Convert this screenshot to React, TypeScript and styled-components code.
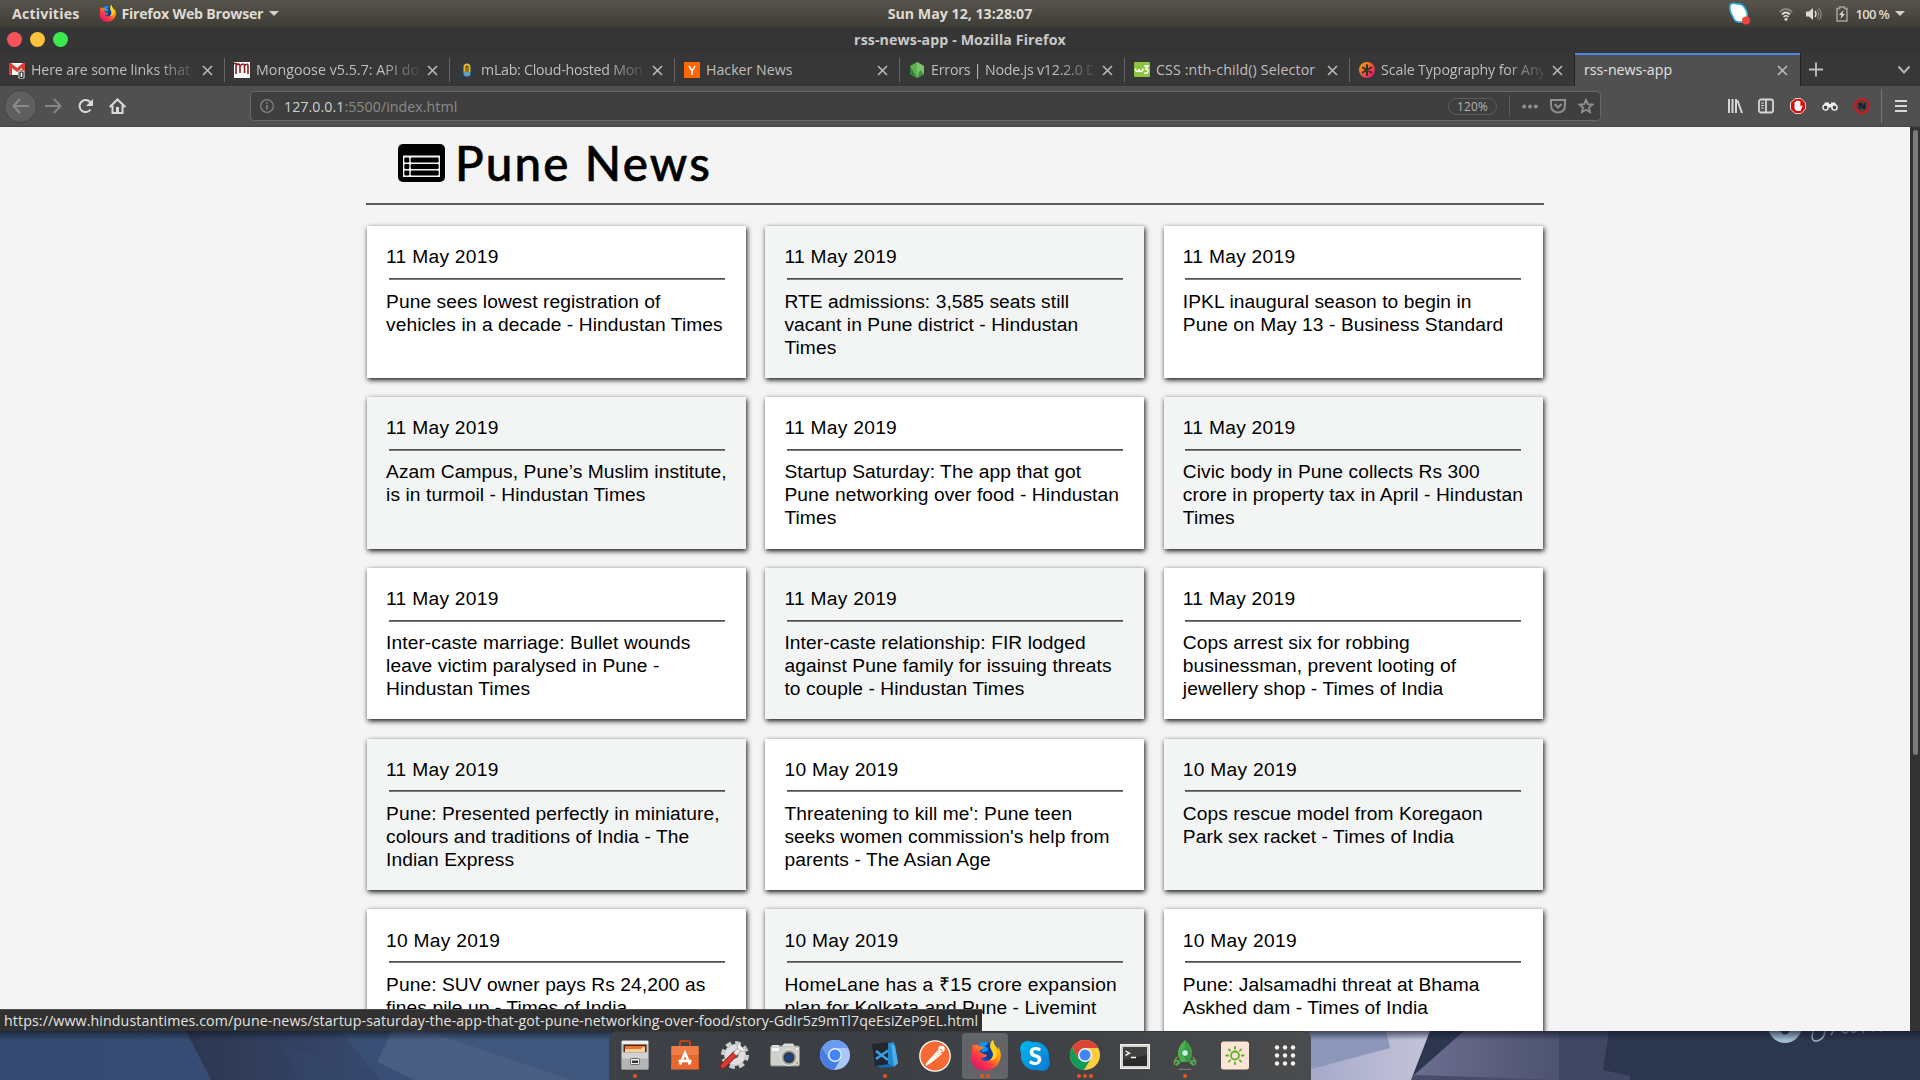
import React from 'react';
import styled, { createGlobalStyle } from 'styled-components';

const UI = '"Open Sans", "Noto Sans", sans-serif';

const GlobalStyle = createGlobalStyle`
  * { box-sizing: border-box; }
  body { margin: 0; background: #2d364f; overflow: hidden; }
  svg { display: block; flex: none; }
`;

const Screen = styled.div`
  width: 1920px;
  height: 1080px;
  display: flex;
  flex-direction: column;
  overflow: hidden;
  font-family: ${UI};
`;

/* ---------- desktop panel ---------- */

const Panel = styled.div`
  height: 27px;
  flex: none;
  display: grid;
  grid-template-columns: 1fr auto 1fr;
  align-items: center;
  background: linear-gradient(#57544b, #3f3d38);
  color: #dfdbd2;
  font-size: 14.2px;
  font-weight: 700;
  line-height: 26px;
`;

const PanelLeft = styled.div`
  display: flex;
  align-items: center;
  padding-left: 12px;
`;

const PanelRight = styled.div`
  display: flex;
  align-items: center;
  justify-content: flex-end;
  padding-right: 15px;
`;

const Label = styled.span<{ $ls?: number; $ml?: number; $size?: number; $weight?: number }>`
  white-space: pre;
  letter-spacing: ${p => p.$ls ?? 0}px;
  margin-left: ${p => p.$ml ?? 0}px;
  ${p => p.$size && `font-size: ${p.$size}px;`}
  ${p => p.$weight && `font-weight: ${p.$weight};`}
`;

const Caret = styled.i<{ $ml: number }>`
  margin-left: ${p => p.$ml}px;
  border: 5px solid transparent;
  border-top-color: #d5d1c8;
  border-bottom: 0;
`;

const Gap = styled.i<{ $w: number }>`
  width: ${p => p.$w}px;
  flex: none;
`;

/* ---------- window chrome ---------- */

const TitleBar = styled.div`
  height: 26px;
  flex: none;
  display: grid;
  grid-template-columns: 1fr auto 1fr;
  align-items: center;
  background: #353535;
  color: #c9c9c9;
  font-size: 14.2px;
  font-weight: 700;
  padding-bottom: 1px;
`;

const Lights = styled.div`
  display: flex;
  gap: 8px;
  padding-left: 7px;
`;

const Light = styled.i<{ $c: string }>`
  width: 15px;
  height: 15px;
  border-radius: 50%;
  background: ${p => p.$c};
`;

const TabStrip = styled.div`
  height: 33px;
  flex: none;
  display: flex;
  background: #373737;
`;

const Tab = styled.div<{ $active?: boolean; $line?: boolean }>`
  width: 225px;
  height: 33px;
  flex: none;
  display: flex;
  align-items: center;
  padding: 1px 12.5px 0 9px;
  font-size: 14.2px;
  color: ${p => (p.$active ? '#e2e2e2' : '#bfbfbf')};
  ${p =>
    p.$active &&
    `background: #505050; box-shadow: inset 0 2px #4a86e8, -1px 0 #222, 1px 0 #222;`}
  ${p =>
    p.$line &&
    `background: linear-gradient(#656565, #656565) 224px 5px / 1px 24px no-repeat;`}
`;

const TabText = styled.span<{ $ls: number; $fade?: boolean; $ml?: number }>`
  flex: 1;
  min-width: 0;
  overflow: hidden;
  white-space: pre;
  line-height: 24px;
  margin-left: ${p => p.$ml ?? 6}px;
  margin-right: 9px;
  letter-spacing: ${p => p.$ls}px;
  ${p => p.$fade && `mask-image: linear-gradient(90deg, #000 calc(100% - 36px), rgba(0, 0, 0, 0.15));`}
`;

const Toolbar = styled.div`
  height: 41px;
  flex: none;
  display: flex;
  align-items: center;
  padding-left: 4px;
  background: #505050;
  border-bottom: 1px solid #464646;
`;

const BackButton = styled.div`
  width: 33px;
  height: 33px;
  border-radius: 50%;
  background: #5f5f5f;
  border: 1px solid #434343;
  display: grid;
  place-items: center;
`;

const UrlBar = styled.div`
  width: 1351px;
  height: 30px;
  margin-left: 124px;
  margin-right: 126px;
  display: flex;
  align-items: center;
  padding: 0 6px 0 9px;
  background: #3f3f3f;
  border: 1px solid #676767;
  border-radius: 4px;
  font-size: 14.2px;
  color: #cfcfcf;
`;

const Url = styled.span`
  margin-left: 10px;
  margin-right: auto;
  letter-spacing: 0.06px;
  b { font-weight: 400; color: #8a8a8a; }
`;

const Zoom = styled.span`
  width: 49px;
  height: 17px;
  border: 1px solid #5c5c5c;
  border-radius: 9px;
  font-size: 11.8px;
  line-height: 15px;
  letter-spacing: 0.2px;
  text-align: center;
  color: #b5b5b5;
`;

const Rule = styled.i<{ $h: number; $c: string; $ml: number; $mr: number }>`
  width: 1px;
  height: ${p => p.$h}px;
  background: ${p => p.$c};
  margin: 0 ${p => p.$mr}px 0 ${p => p.$ml}px;
`;

/* ---------- page ---------- */

const Viewport = styled.div`
  position: relative;
  height: 904px;
  flex: none;
  display: flex;
  overflow: hidden;
  background: #f4f4f4;
`;

const Page = styled.main`
  width: 1910px;
  padding-left: 366px;
  font-family: "Liberation Sans", Arial, sans-serif;
  color: #000;
`;

const Header = styled.header`
  width: 1178px;
  height: 78px;
  display: flex;
  padding: 17px 0 0 32px;
  border-bottom: 2px solid #5c5c5c;
`;

const Brand = styled.h1`
  margin: -10px 0 0 10px;
  font: 500 47.5px/58px Lato, sans-serif;
  letter-spacing: 2.2px;
  white-space: pre;
  -webkit-text-stroke: 0.6px #000;
`;

const Grid = styled.section`
  display: grid;
  grid-template-columns: repeat(3, 379.2px);
  gap: 19.2px;
  padding: 21.2px 0 0 0.9px;
`;

const Card = styled.article`
  height: 151.6px;
  padding: 19.2px;
  background: #fff;
  box-shadow: 1px 2px 5px #111;
  font-size: 19.2px;
  line-height: 23px;
  &:nth-child(even) { background: #f3f5f5; }
`;

const DateLine = styled.div`
  letter-spacing: 0.28px;
`;

const Line = styled.div<{ $rupee: boolean }>`
  white-space: nowrap;
  letter-spacing: ${p => (p.$rupee ? 0.2 : 0.075)}px;
`;

const Divider = styled.div`
  height: 2px;
  margin: 9.6px 2.35px 9.6px 2.45px;
  background: linear-gradient(#4f4f4f 50%, #7c7c7c 50%);
`;

const Scrollbar = styled.div`
  width: 10px;
  background: #333;
  padding: 3px 2px 0 3px;
`;

const Thumb = styled.div`
  height: 625px;
  border-radius: 3px;
  background: #7b7b7b;
`;

const Status = styled.div`
  position: absolute;
  left: 0;
  bottom: 0;
  width: 982px;
  height: 22px;
  padding-left: 4px;
  border-top: 1px solid #4c4c4c;
  background: #313131;
  color: #e4e4e4;
  font-size: 14.2px;
  line-height: 21px;
  white-space: nowrap;
  letter-spacing: 0.115px;
`;

/* ---------- desktop and dock ---------- */

const Desktop = styled.div`
  position: relative;
  height: 49px;
  flex: none;
  padding-left: 609px;
`;

const Wallpaper = styled.svg`
  position: absolute;
  inset: 0;
`;

const Dock = styled.nav`
  position: relative;
  width: 702px;
  height: 49px;
  display: flex;
  padding: 0 1px;
  background: linear-gradient(90deg, #3e4246, #3b3f43 30%, #3e4145 60%, #4a4b4c);
  border-radius: 8px 8px 0 0;
  border-top: 1px solid #373a3c;
`;

const DockItem = styled.div<{ $active?: boolean }>`
  width: 46px;
  height: 46px;
  margin: 1px 2px;
  display: grid;
  grid-template-rows: 1fr 5px;
  justify-items: center;
  padding-top: 7px;
  border-radius: 4px;
  background: ${p => (p.$active ? '#626467' : 'transparent')};
`;

const Dots = styled.div`
  display: flex;
  gap: 2px;
`;

const Dot = styled.i`
  width: 4px;
  height: 4px;
  border-radius: 50%;
  background: #e95420;
`;

/* ---------- drawings ---------- */

const FirefoxArt = ({ s }: { s: number }) => (
  <svg width={s} height={s} viewBox="0 0 32 32">
    <defs>
      <linearGradient id="fx1" x1="1" y1="0" x2="0.2" y2="1">
        <stop offset="0" stopColor="#ffe900" />
        <stop offset=".4" stopColor="#ff980e" />
        <stop offset=".7" stopColor="#ff3647" />
        <stop offset="1" stopColor="#d5136e" />
      </linearGradient>
    </defs>
    <circle cx="15" cy="14" r="11" fill="#0a57c8" />
    <path d="M13 3c6-2 11 1 12 7l-4 12-10-4z" fill="#0a3f9e" />
    <path d="M9 4c3-2 7-3 10-1l-4 4c3 0 4 2 3 4l-5 2z" fill="#1492f5" />
    <path
      d="M3 3C2 6 2 8 2.500 10C-1 18 1 26 8 30c8 4 18 1 22-7 3-6 2-12-1-16 0 1 .2 2 0 3C27 6 24 5 24 0c-3 2-4 6-2 10 3 4 2 9-2 11-4 2-8 0-9-3 2 1 4 .5 6-1 1-1 0-2-1-2-3 0-3-2-6-2 0-2 1-3 3-4 1-1 1-2 0-2-2 0-4-.5-5-2-2-.5-3 0-4 1-1-1-1.500-3-1-3z"
      fill="url(#fx1)"
    />
    <path d="M24 0c-3 2-4 6-2 10 3 4 2 9-2 11 6 0 9-4 8-10-1-4-4-6-4-11z" fill="#ffd21f" />
  </svg>
);

const Files = () => (
  <svg width="28" height="30" viewBox="0 0 28 30">
    <rect x=".5" y=".5" width="27" height="29" rx="1.500" fill="#c9c9c9" stroke="#8d8d8d" />
    <rect x="1" y="1" width="26" height="3" fill="#eee" />
    <rect x="2.500" y="4.500" width="23" height="8" fill="#55250f" />
    <path d="M4 6h20v6H4z" fill="#e8772c" />
    <path d="M4 9h16l2-2h2v5H4z" fill="#f8cf9b" />
    <path d="M1 12.500h26V29H1z" fill="#b5b5b5" />
    <path d="M1 12.500h26v6H1z" fill="#d2d2d2" />
    <rect x="9.500" y="18.500" width="9" height="6" rx="1" fill="#eee" stroke="#666" />
    <rect x="11" y="20.500" width="6" height="2.500" fill="#333" />
  </svg>
);

const Software = () => (
  <svg width="30" height="30" viewBox="0 0 30 30">
    <path d="M10 8V2.500Q10 1 12 1h6q2 0 2 1.500V8" fill="none" stroke="#c0441a" strokeWidth="2" />
    <path d="M1.500 6h27L29 29.500H1z" fill="#e9682f" />
    <path d="M1.500 6h27l.2 9H1.200z" fill="#f07c46" />
    <path d="M10 24.500L15 13l5 11.500M8.500 21h13" fill="none" stroke="#fff" strokeWidth="2.600" />
  </svg>
);

const Tools = () => (
  <svg width="30" height="30" viewBox="0 0 30 30">
    <circle cx="15" cy="15" r="12" fill="none" stroke="#cfcfcf" strokeWidth="4" strokeDasharray="5.400 4" />
    <circle cx="15" cy="15" r="10.500" fill="#e0e0e0" stroke="#c5c5c5" />
    <circle cx="15" cy="15" r="3.500" fill="#74777a" />
    <path d="M3 26L15 14" stroke="#8b1414" strokeWidth="6" strokeLinecap="round" />
    <path d="M3 26L15 14" stroke="#d83a34" strokeWidth="4.500" strokeLinecap="round" />
    <path d="M15 14l6-6" stroke="#999" strokeWidth="5" />
    <path d="M15 14l6-6" stroke="#eee" strokeWidth="3.600" />
    <path d="M20 2q-5 4-1 8 5 3 8-2l-4 .500-2-2z" fill="#f2f2f2" stroke="#888" strokeWidth=".6" />
  </svg>
);

const Camera = () => (
  <svg width="30" height="30" viewBox="0 0 30 30">
    <rect x=".5" y="6" width="29" height="20" rx="1.500" fill="#cfcfcb" stroke="#8e8e8a" />
    <path d="M2 5h7v2H2zM14 3.500h9l2 3H12z" fill="#dededa" />
    <rect x="2" y="8" width="7" height="3" fill="#f6f6f6" />
    <circle cx="19" cy="17.500" r="8" fill="#a4a4a4" stroke="#ececec" />
    <circle cx="19" cy="17.500" r="5.500" fill="#333a44" />
    <circle cx="19" cy="17.500" r="3" fill="#12459a" />
    <circle cx="27" cy="9" r="1" fill="#fff" />
    <rect x="26" y="22" width="2" height="2" fill="#f0a020" />
  </svg>
);

const ChromeArt = ({ mono }: { mono?: boolean }) => {
  const [top, right, left] = mono ? ['#6b9cf0', '#a8c7fa', '#4a7de2'] : ['#db4437', '#ffcd40', '#0f9d58'];
  return (
    <svg width="30" height="30" viewBox="0 0 30 30">
      <circle cx="15" cy="15" r="15" fill={right} />
      <path d="M2 7.500A15 15 0 0 1 28.200 8H15L8.500 18.500z" fill={top} />
      <path d="M2 7.500A15 15 0 0 0 14 30l7-11.500-12.500 0z" fill={left} />
      <circle cx="15" cy="15" r="7" fill={mono ? '#e6effd' : '#f4f4f4'} />
      <circle cx="15" cy="15" r="5.500" fill="#4285f4" />
    </svg>
  );
};

const Code = () => (
  <svg width="28" height="30" viewBox="0 0 28 30">
    <path d="M1 4l19-2 1 23-17 2z" fill="#23272d" />
    <path d="M5 11l12 9M5 19l12-8.500" stroke="#3aa0e8" strokeWidth="2.600" />
    <path d="M17 3l6-1 4 21-4 4-6-3z" fill="#2489ca" />
    <path d="M4 26l14-2 4 3-12 .500z" fill="#0e6db3" />
    <path d="M20 4l4 1.500 3 18-4 3z" fill="#4bb0f2" />
  </svg>
);

const Postman = () => (
  <svg width="32" height="32" viewBox="0 0 32 32">
    <circle cx="16" cy="16" r="15.200" fill="#f76935" stroke="#fff" strokeWidth="1.300" />
    <path d="M7 25l3-4L19 11l3 3-10 8z" fill="none" stroke="#fff" strokeWidth="1.500" />
    <path d="M9 23l11-10" stroke="#fff" strokeWidth="1.800" />
    <circle cx="22.500" cy="9" r="3.200" fill="#fff" />
    <path d="M21 9l3 2" stroke="#f76935" />
  </svg>
);

const Skype = () => (
  <svg width="32" height="32" viewBox="0 0 32 32">
    <defs>
      <linearGradient id="sk" gradientUnits="userSpaceOnUse" x1="2" y1="2" x2="30" y2="30">
        <stop offset="0" stopColor="#00b7f1" />
        <stop offset="1" stopColor="#0b78d4" />
      </linearGradient>
    </defs>
    <g fill="url(#sk)">
      <circle cx="16" cy="16" r="14" />
      <circle cx="9" cy="9" r="8" />
      <circle cx="23" cy="23" r="8" />
    </g>
    <text x="16" y="24.500" textAnchor="middle" fontFamily="Lato, sans-serif" fontWeight="900" fontSize="24" fill="#fff">S</text>
  </svg>
);

const Terminal = () => (
  <svg width="30" height="30" viewBox="0 0 30 30">
    <rect x=".5" y="4.500" width="29" height="24" fill="#d4d4d0" stroke="#f3f3f0" />
    <rect x="3" y="7" width="24" height="19" fill="#2b2b2b" />
    <path d="M3 7h24v8L3 20z" fill="#414141" />
    <path d="M5.500 11l4 2.200-4 2.200M11 17.500h5" fill="none" stroke="#fff" strokeWidth="1.400" />
  </svg>
);

const Rocket = () => (
  <svg width="24" height="30" viewBox="0 0 24 30">
    <path d="M4 17q-4 4-2 8M20 17q4 4 2 8" fill="none" stroke="#a08a5a" strokeWidth="1.200" />
    <path d="M12 0q8 7 7 16l-3 6H8l-3-6Q4 7 12 0z" fill="#4caf50" />
    <path d="M12 0q8 7 7 16l-3 6h-4z" fill="#3b9a41" />
    <circle cx="12" cy="13" r="3.500" fill="#c7efe2" stroke="#2e7d4f" />
    <path d="M1 22q4-3 5 0M23 22q-4-3-5 0M3 25l4-3M21 25l-4-3" fill="none" stroke="#4caf50" strokeWidth="2.200" />
    <path d="M6 29.300h12" stroke="#888" />
  </svg>
);

const Sun = () => (
  <svg width="28" height="30" viewBox="0 0 28 30">
    <rect y="1.500" width="28" height="28" rx="2.500" fill="#fce5d5" />
    <g stroke="#5fae2c" strokeWidth="1.800" fill="none" strokeLinecap="round">
      <circle cx="14" cy="15.500" r="4" />
      {[0, 45, 90, 135, 180, 225, 270, 315].map(r => (
        <path key={r} d="M14 8.700V6.800" transform={`rotate(${r} 14 15.500)`} />
      ))}
    </g>
  </svg>
);

const Apps = () => (
  <svg width="22" height="30" viewBox="0 0 22 30">
    {[7.5, 15.5, 23.5].map(y => [3, 11, 19].map(x => <circle key={`${x}-${y}`} cx={x} cy={y} r="2.200" fill="#f0f0f0" />))}
  </svg>
);

const Close = () => (
  <svg width="11" height="11" viewBox="0 0 11 11">
    <path d="M1 1l9 9M10 1l-9 9" stroke="#b9b9b9" strokeWidth="1.600" />
  </svg>
);

const favicons: Record<string, React.ReactNode> = {
  gmail: (
    <svg width="16" height="17" viewBox="0 0 16 17">
      <path d="M0 1h16v12H0z" fill="#f5f5f5" />
      <path d="M0 1h2l6 5 6-5h2v12h-3V6L8 10 3 6v7H0z" fill="#e03b33" />
      <rect x="9.500" y="8.500" width="6" height="8" rx="1.500" fill="#fff" stroke="#999" />
      <rect x="11" y="10" width="3" height="5.500" rx=".8" fill="none" stroke="#111" strokeWidth="1.200" />
    </svg>
  ),
  mongoose: (
    <svg width="16" height="16" viewBox="0 0 16 16">
      <path d="M0 0h16v16H0z" fill="#fff" />
      <path d="M2 12V3q3-2 4 .500V11M6.500 3.500q3-3 4 0V11M11 3q3-2 3 1v8M0 1.500h3" fill="none" stroke="#8e1a1a" strokeWidth="1.600" />
    </svg>
  ),
  mlab: (
    <svg width="16" height="16" viewBox="0 0 16 16">
      <path d="M0 0h16v16H0z" fill="#2e3a45" />
      <path d="M5.500 10V5q0-2.500 2.500-2.500t2.500 2.500v5" fill="none" stroke="#f1b51c" strokeWidth="2" />
      <path d="M4.500 10h7v3q-3.500 3-7 0z" fill="#5aa0d0" />
      <path d="M8 5v5" stroke="#f1b51c" />
    </svg>
  ),
  hn: (
    <svg width="16" height="16" viewBox="0 0 16 16">
      <path d="M0 0h16v16H0z" fill="#ff6600" />
      <path d="M5 4l3 5 3-5M8 9v4" fill="none" stroke="#fff" strokeWidth="1.500" />
    </svg>
  ),
  node: (
    <svg width="16" height="16" viewBox="0 0 16 16">
      <path d="M8 0l7 4v8l-7 4-7-4V4z" fill="#5fae4f" />
      <path d="M8 0l7 4v8l-7 4z" fill="#7cc16b" />
      <path d="M1 4l7 12-7-4z" fill="#35803a" />
      <path d="M15 12l-7 4 3-8z" fill="#468f42" />
    </svg>
  ),
  w3: (
    <svg width="16" height="16" viewBox="0 0 16 16">
      <rect width="16" height="15" rx="1" fill="#8bc53f" />
      <path d="M1.500 6.500q0 3 1.800 3t1.800-2.500q0 2.500 1.800 2.500T9 6.500M10 4h4l-2.200 3q2.700.200 2.200 2.700-1 2.300-4 1.300" fill="none" stroke="#fff" strokeWidth="1.500" />
    </svg>
  ),
  scale: (
    <svg width="16" height="16" viewBox="0 0 16 16">
      <defs>
        <linearGradient id="sc" x1="0" y1="0" x2="1" y2="1">
          <stop offset=".1" stopColor="#ffa000" />
          <stop offset=".9" stopColor="#e0107a" />
        </linearGradient>
      </defs>
      <circle cx="8" cy="8" r="8" fill="url(#sc)" />
      <path d="M8 3v10M3.700 5.500l8.600 5M12.300 5.500l-8.600 5" stroke="#332" strokeWidth="2" strokeLinecap="round" />
    </svg>
  ),
};

const tabs = [
  { icon: 'gmail', text: 'Here are some links that', ls: -0.12, fade: true },
  { icon: 'mongoose', text: 'Mongoose v5.5.7: API docs', ls: 0.05, fade: true },
  { icon: 'mlab', text: 'mLab: Cloud-hosted MongoDB', ls: -0.25, fade: true },
  { icon: 'hn', text: 'Hacker News', ls: 0, fade: false },
  { icon: 'node', text: 'Errors | Node.js v12.2.0 Docs', ls: -0.2, fade: true },
  { icon: 'w3', text: 'CSS :nth-child() Selector', ls: 0.14, fade: false },
  { icon: 'scale', text: 'Scale Typography for Any', ls: -0.1, fade: true },
];

const news: [string, string[]][] = [
  ['11 May 2019', ['Pune sees lowest registration of', 'vehicles in a decade - Hindustan Times']],
  ['11 May 2019', ['RTE admissions: 3,585 seats still', 'vacant in Pune district - Hindustan', 'Times']],
  ['11 May 2019', ['IPKL inaugural season to begin in', 'Pune on May 13 - Business Standard']],
  ['11 May 2019', ['Azam Campus, Pune’s Muslim institute,', 'is in turmoil - Hindustan Times']],
  ['11 May 2019', ['Startup Saturday: The app that got', 'Pune networking over food - Hindustan', 'Times']],
  ['11 May 2019', ['Civic body in Pune collects Rs 300', 'crore in property tax in April - Hindustan', 'Times']],
  ['11 May 2019', ['Inter-caste marriage: Bullet wounds', 'leave victim paralysed in Pune -', 'Hindustan Times']],
  ['11 May 2019', ['Inter-caste relationship: FIR lodged', 'against Pune family for issuing threats', 'to couple - Hindustan Times']],
  ['11 May 2019', ['Cops arrest six for robbing', 'businessman, prevent looting of', 'jewellery shop - Times of India']],
  ['11 May 2019', ['Pune: Presented perfectly in miniature,', 'colours and traditions of India - The', 'Indian Express']],
  ['10 May 2019', ["Threatening to kill me': Pune teen", "seeks women commission's help from", 'parents - The Asian Age']],
  ['10 May 2019', ['Cops rescue model from Koregaon', 'Park sex racket - Times of India']],
  ['10 May 2019', ['Pune: SUV owner pays Rs 24,200 as', 'fines pile up - Times of India']],
  ['10 May 2019', ['HomeLane has a ₹15 crore expansion', 'plan for Kolkata and Pune - Livemint']],
  ['10 May 2019', ['Pune: Jalsamadhi threat at Bhama', 'Askhed dam - Times of India']],
];

const dock: { art: React.ReactNode; dots: number; active?: boolean }[] = [
  { art: <Files />, dots: 1 },
  { art: <Software />, dots: 0 },
  { art: <Tools />, dots: 0 },
  { art: <Camera />, dots: 0 },
  { art: <ChromeArt mono />, dots: 0 },
  { art: <Code />, dots: 1 },
  { art: <Postman />, dots: 0 },
  { art: <FirefoxArt s={31} />, dots: 2, active: true },
  { art: <Skype />, dots: 0 },
  { art: <ChromeArt />, dots: 3 },
  { art: <Terminal />, dots: 0 },
  { art: <Rocket />, dots: 1 },
  { art: <Sun />, dots: 0 },
  { art: <Apps />, dots: 0 },
];

export default function App() {
  return (
    <Screen>
      <GlobalStyle />
      <Panel>
        <PanelLeft>
          <Label $ls={0.15}>Activities</Label>
          <Gap $w={20} />
          <FirefoxArt s={17} />
          <Label $ls={-0.25} $ml={5}>Firefox Web Browser</Label>
          <Caret $ml={6} />
        </PanelLeft>
        <Label $ls={0}>Sun May 12, 13:28:07</Label>
        <PanelRight>
          <svg width="22" height="26" viewBox="0 0 22 26">
            <path d="M2 4q2-3 7-1 5-1 8 4 3 5 2 9-1 6-6 5-6 1-8-5-4-6-3-12z" fill="#fff" stroke="#2ba5de" strokeWidth="1.600" />
            <circle cx="18" cy="19.500" r="4" fill="#f0463a" />
          </svg>
          <Gap $w={29} />
          <svg width="14" height="14" viewBox="0 0 14 14" fill="none">
            <path d="M.8 5Q7-1 13.200 5" stroke="#8b8880" strokeWidth="1.800" />
            <path d="M3 7.500q4-4 8 0" stroke="#dfdbd2" strokeWidth="1.800" />
            <path d="M4.500 10q2.500-2.500 5 0" stroke="#dfdbd2" strokeWidth="1.500" />
            <circle cx="7" cy="12.300" r="1.500" fill="#dfdbd2" />
          </svg>
          <Gap $w={13} />
          <svg width="16" height="14" viewBox="0 0 16 14">
            <path d="M0 4.500h3L7 1v12L3 9.500H0z" fill="#dfdbd2" />
            <path d="M9 4q2 3 0 6" fill="none" stroke="#dfdbd2" strokeWidth="1.400" />
            <path d="M11 2.500q3.500 4.500 0 9M13 1q4.500 6 0 12" fill="none" stroke="#8b8880" strokeWidth="1.200" />
          </svg>
          <Gap $w={14} />
          <svg width="12" height="16" viewBox="0 0 12 16">
            <path d="M1 2.500h2.500V1h5v1.500H11V15H1z" fill="none" stroke="#a5a299" strokeWidth="1.500" />
            <path d="M7.500 4L3 9h2.500L4.500 13 9 8H6.500z" fill="#dfdbd2" />
          </svg>
          <Label $ml={8} $ls={-0.7} $size={13} $weight={600}>100 %</Label>
          <Caret $ml={6} />
        </PanelRight>
      </Panel>

      <TitleBar>
        <Lights>
          <Light $c="#f6545a" />
          <Light $c="#fcc43c" />
          <Light $c="#3bea4c" />
        </Lights>
        <Label $ls={0.1}>rss-news-app - Mozilla Firefox</Label>
        <span />
      </TitleBar>

      <TabStrip>
        {tabs.map((t, i) => (
          <Tab key={t.icon} $line={i < 6}>
            {favicons[t.icon]}
            <TabText $ls={t.ls} $fade={t.fade}>{t.text}</TabText>
            <Close />
          </Tab>
        ))}
        <Tab $active>
          <TabText $ls={0} $ml={0}>rss-news-app</TabText>
          <Close />
        </Tab>
        <Gap $w={8} />
        <svg width="16" height="33" viewBox="0 0 16 33"><path d="M8 9.500v14M1 16.500h14" stroke="#c0c0c0" strokeWidth="1.800" /></svg>
        <Gap $w={73} />
        <svg width="14" height="33" viewBox="0 0 14 33"><path d="M1.500 13.500l5.500 6 5.500-6" fill="none" stroke="#b5b5b5" strokeWidth="2" /></svg>
      </TabStrip>

      <Toolbar>
        <BackButton>
          <svg width="17" height="16" viewBox="0 0 17 16" fill="none" stroke="#8a8a8a" strokeWidth="2"><path d="M8 1L1.500 8 8 15M2 8h15" /></svg>
        </BackButton>
        <Gap $w={8} />
        <svg width="17" height="16" viewBox="0 0 17 16" fill="none" stroke="#858585" strokeWidth="2"><path d="M9 1l6.500 7L9 15M0 8h15" /></svg>
        <Gap $w={15} />
        <svg width="17" height="16" viewBox="0 0 17 16" fill="none" stroke="#dadada" strokeWidth="2">
          <path d="M13.500 11.500A6 6 0 1 1 13 4l2 2.500" />
          <path d="M16 1v7H9z" fill="#dadada" stroke="none" />
        </svg>
        <Gap $w={15} />
        <svg width="17" height="17" viewBox="0 0 17 17" fill="none" stroke="#dadada" strokeWidth="2">
          <path d="M.7 9L8.500 1.500 16.300 9M3.500 7.500V15h10V7.500" />
          <path d="M7 9h3v5H7z" fill="#dadada" stroke="none" />
        </svg>
        <UrlBar>
          <svg width="14" height="14" viewBox="0 0 14 14" fill="none" stroke="#858585" strokeWidth="1.200">
            <circle cx="7" cy="7" r="6.300" />
            <path d="M7 6v4.500M7 3.300v1.500" strokeWidth="1.600" />
          </svg>
          <Url>127.0.0.1<b>:5500/index.html</b></Url>
          <Zoom>120%</Zoom>
          <Rule $h={22} $c="#5a5a5a" $ml={12} $mr={12} />
          <svg width="16" height="5" viewBox="0 0 16 5" fill="#8f8f8f"><circle cx="2.200" cy="2.500" r="2" /><circle cx="8" cy="2.500" r="2" /><circle cx="13.800" cy="2.500" r="2" /></svg>
          <Gap $w={12} />
          <svg width="16" height="16" viewBox="0 0 16 16" fill="none" stroke="#8f8f8f" strokeWidth="2">
            <path d="M1 2h14v5q0 7-7 7.500Q1 14 1 7zM4.500 6L8 9.500 11.500 6" />
          </svg>
          <Gap $w={12} />
          <svg width="16" height="16" viewBox="0 0 16 16" fill="none" stroke="#8f8f8f" strokeWidth="1.800">
            <path d="M8 1.800l1.900 4.300 4.700.4-3.600 3.100 1.100 4.600L8 11.800l-4.100 2.400L5 9.600 1.400 6.500l4.700-.4z" />
          </svg>
        </UrlBar>
        <svg width="16" height="16" viewBox="0 0 16 16" stroke="#d5d5d5" strokeWidth="2"><path d="M2 1v14M5.500 1v14M9 1v14M10.500 2.500L15 15" fill="none" /></svg>
        <Gap $w={15} />
        <svg width="16" height="16" viewBox="0 0 16 16" fill="none" stroke="#d5d5d5" strokeWidth="1.800">
          <rect x="1" y="1.500" width="14" height="13" rx="2" />
          <path d="M8 2v12" />
          <path d="M3 5h3M3 7.500h3M3 10h3" strokeWidth="1.100" />
        </svg>
        <Gap $w={16} />
        <svg width="16" height="16" viewBox="0 0 16 16">
          <path d="M5 .5h6L15.500 5v6L11 15.500H5L.5 11V5z" fill="#e00808" stroke="#f3d5d5" />
          <path d="M4.500 7V4.500q.8-.8 1.300 0V3q.8-.8 1.500 0 .8-1 1.600 0v.5q1-.8 1.500 0v5l1.400-1q1-.2.600 1L10.500 13H7q-2.500-1-2.500-3z" fill="#fff" />
        </svg>
        <Gap $w={16} />
        <svg width="16" height="16" viewBox="0 0 16 16">
          <path d="M3 4.500h4v1.500h2v-1.500h4l2.500 5h-15z" fill="#f2f2f2" />
          <g fill="#4a4a4a" stroke="#f2f2f2" strokeWidth="1.400"><circle cx="3.500" cy="9.500" r="2.600" /><circle cx="12.500" cy="9.500" r="2.600" /></g>
        </svg>
        <Gap $w={16} />
        <svg width="16" height="16" viewBox="0 0 16 16">
          <circle cx="8" cy="8" r="6.900" fill="#454545" stroke="#cc1a22" strokeWidth="2.200" />
          <text x="8" y="11.300" textAnchor="middle" fontFamily={UI} fontWeight="800" fontSize="9" fill="#191919">N</text>
        </svg>
        <Rule $h={34} $c="#757575" $ml={11} $mr={13} />
        <svg width="12" height="14" viewBox="0 0 12 14"><path d="M0 2h12M0 7h12M0 12h12" stroke="#d8d8d8" strokeWidth="2" /></svg>
      </Toolbar>

      <Viewport>
        <Page>
          <Header>
            <svg width="47" height="38" viewBox="0 0 47 38">
              <rect width="47" height="38" rx="5" fill="#000" />
              <path d="M5 11.500h37V33H5z" fill="#f4f4f4" />
              {[13.5, 20, 26.5].map(y => (
                <g key={y}>
                  <rect x="6.300" y={y} width="5" height="5" rx="1.300" />
                  <rect x="12.700" y={y} width="28" height="5" rx="1.300" />
                </g>
              ))}
            </svg>
            <Brand>Pune News</Brand>
          </Header>
          <Grid>
            {news.map(([date, lines], i) => (
              <Card key={i}>
                <DateLine>{date}</DateLine>
                <Divider />
                {lines.map(l => <Line key={l} $rupee={l.includes('₹')}>{l}</Line>)}
              </Card>
            ))}
          </Grid>
        </Page>
        <Scrollbar><Thumb /></Scrollbar>
        <Status>https://www.hindustantimes.com/pune-news/startup-saturday-the-app-that-got-pune-networking-over-food/story-GdIr5z9mTl7qeEsiZeP9EL.html</Status>
      </Viewport>

      <Desktop>
        <Wallpaper width="1920" height="49" viewBox="0 0 1920 49">
          <defs>
            <linearGradient id="wl"><stop offset="0" stopColor="#34496f" /><stop offset="1" stopColor="#3c5379" /></linearGradient>
            <linearGradient id="wd"><stop offset="0" stopColor="#2c364f" /><stop offset="1" stopColor="#384a70" /></linearGradient>
            <linearGradient id="wm"><stop offset="0" stopColor="#6d6f90" /><stop offset="1" stopColor="#4d5270" /></linearGradient>
            <linearGradient id="wv"><stop offset="0" stopColor="#a3a6c8" /><stop offset="1" stopColor="#c4c4da" /></linearGradient>
            <linearGradient id="ws" x2="0" y2="1"><stop offset="0" stopColor="#101828" stopOpacity=".65" /><stop offset="1" stopColor="#101828" stopOpacity="0" /></linearGradient>
          </defs>
          <path d="M0 0h620v49H0z" fill="url(#wl)" />
          <path d="M186 0h155l39 49H211z" fill="url(#wd)" />
          <path d="M282 15l90 22 8 12H300z" fill="#344669" opacity=".7" />
          <path d="M392 0h40l170 49H415l-38-18z" fill="#4a5e84" />
          <path d="M427 0h190v49h-45z" fill="#40577d" />
          <path d="M1300 0h620v49h-620z" fill="#2d364f" />
          <path d="M1300 0h130l-19 49h-111z" fill="url(#wv)" />
          <path d="M1300 0h86l4 17-90 24z" fill="#8c97b9" />
          <path d="M1464 0h95v49h-148l3-5z" fill="url(#wm)" />
          <path d="M1559 0h50l-6 39 27 6v4h-71z" fill="#3f4764" />
          <path d="M1411 49l4-5 144 5z" fill="#4b4c6c" />
          <circle cx="1785" cy="-5" r="17" fill="#a1bbd0" />
          <path d="M1780 0q5 7 10 0" fill="#2d364f" />
          <path d="M1813 0q-3 11 4 10 8-2 8-11M1831 4l3-5M1842 0q4 4 6 0M1851 0q3 3 6-1M1862-1l2 3M1872-1l1 2M1880 0h2" fill="none" stroke="#98afc6" strokeWidth="1.600" />
          <path d="M0 0h1920v9H0z" fill="url(#ws)" />
        </Wallpaper>
        <Dock>
          {dock.map((d, i) => (
            <DockItem key={i} $active={d.active}>
              {d.art}
              <Dots>{Array.from({ length: d.dots }, (_, k) => <Dot key={k} />)}</Dots>
            </DockItem>
          ))}
        </Dock>
      </Desktop>
    </Screen>
  );
}
